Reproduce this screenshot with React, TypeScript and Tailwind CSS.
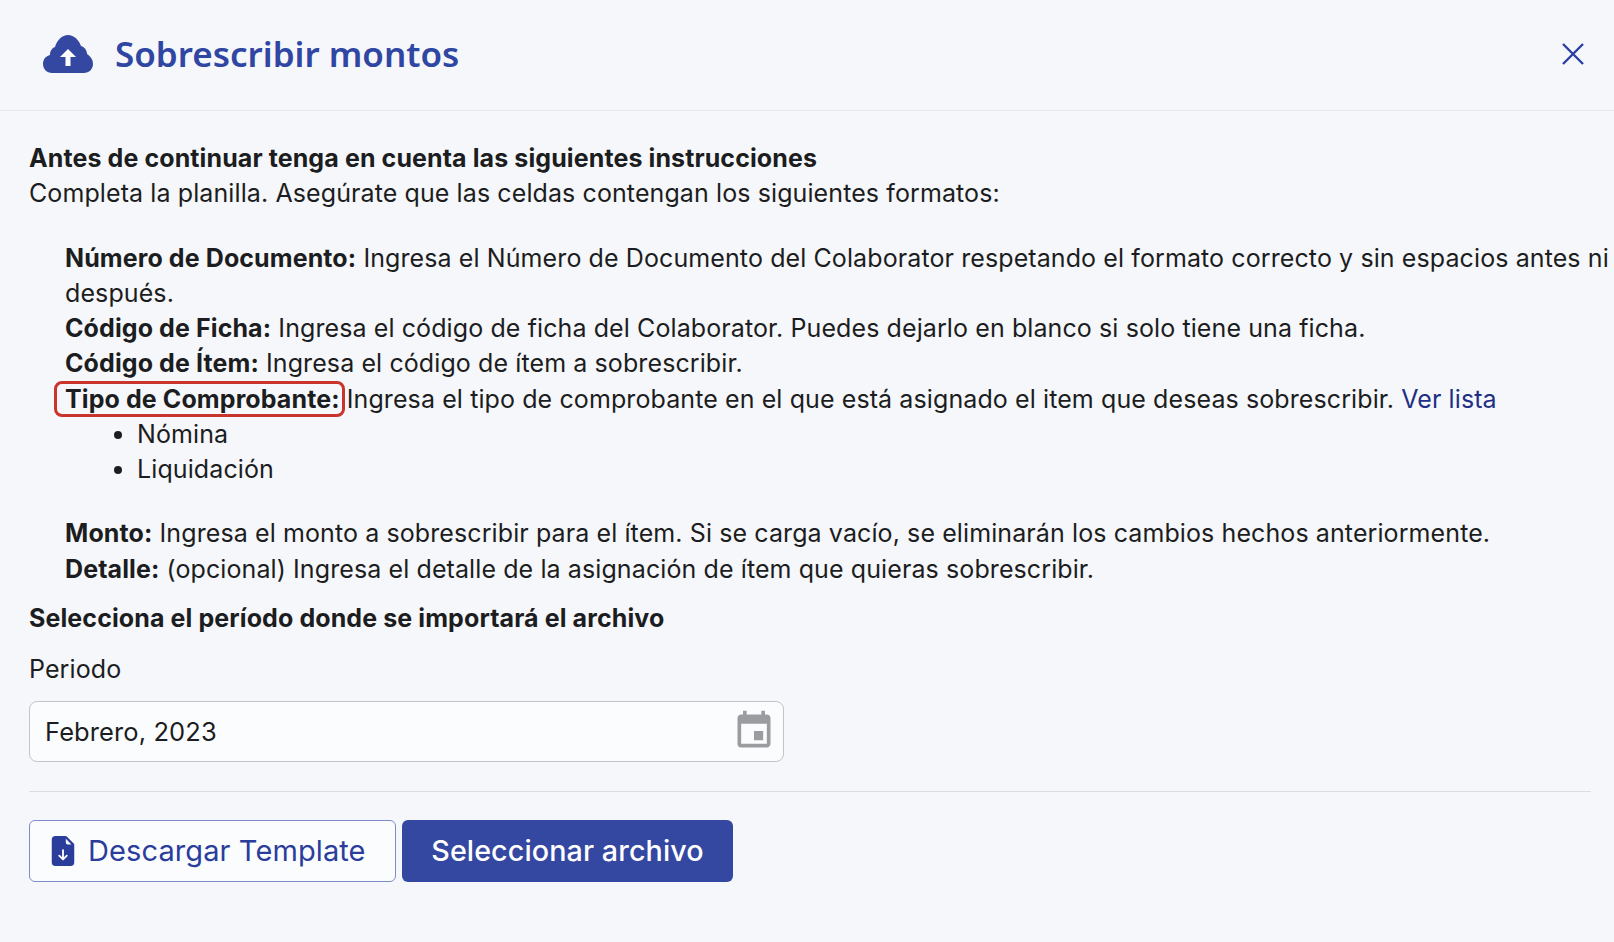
import React from "react";
import { MdEvent } from "react-icons/md";
import { BsFileEarmarkArrowDownFill } from "react-icons/bs";

const Row = ({ label, children }: { label: React.ReactNode; children: React.ReactNode }) => (
  <p>
    <b className="font-bold">{label}</b> {children}
  </p>
);

export default function App() {
  return (
    <div className="min-h-[942px] w-full overflow-hidden bg-[#f6f7fa] font-['Inter',sans-serif] text-[25px] leading-[35.3px] tracking-[0.1px] text-[#1c1d21]">
      {/* Header */}
      <div className="flex h-[111px] items-center justify-between border-b border-[#e6e7ea] pb-[2px] pl-[43px] pr-[29px]">
        <div className="flex items-center gap-[22px]">
          <svg width="50" height="38" viewBox="0 0 50 38">
            <path
              fill="#3548a1"
              d="M9 38C4 38 0 34 0 29 0 24 3 21 7 20 7 16 9 13 12 12 14 5 19 0 25 0 31 0 36 5 38 11 42 12 44 16 44 19 47 21 50 24 50 29 50 34 46 38 41 38Z"
            />
            <path fill="#ffffff" d="M25 14 33 22H27.5V31H22.5V22H17Z" />
          </svg>
          <h1 className="font-['Noto_Sans',sans-serif] text-[35px] font-semibold tracking-normal text-[#3046a3]">Sobrescribir montos</h1>
        </div>
        <svg width="24" height="24" viewBox="0 0 24 24" fill="none" stroke="#2a3fa0" strokeWidth="2.4">
          <path d="M2 2 L22 22 M22 2 L2 22" />
        </svg>
      </div>

      {/* Instructions */}
      <div className="pl-[29px] pr-[5px] pt-[30px]">
        <p className="font-bold">Antes de continuar tenga en cuenta las siguientes instrucciones</p>
        <p>Completa la planilla. Asegúrate que las celdas contengan los siguientes formatos:</p>

        <div className="mt-[29px] pl-[36px]">
          <Row label="Número de Documento:">
            Ingresa el Número de Documento del Colaborator respetando el formato correcto y sin espacios antes ni después.
          </Row>
          <Row label="Código de Ficha:">
            Ingresa el código de ficha del Colaborator. Puedes dejarlo en blanco si solo tiene una ficha.
          </Row>
          <Row label="Código de Ítem:">Ingresa el código de ítem a sobrescribir.</Row>
          <p>
            <span className="relative font-bold">
              Tipo de Comprobante:
              <span className="absolute -bottom-[3px] -left-[11px] -right-[5px] -top-[3px] rounded-[8px] border-[3px] border-[#c9352d]" />
            </span>{" "}
            Ingresa el tipo de comprobante en el que está asignado el item que deseas sobrescribir.{" "}
            <a className="text-[#1f2f85]">Ver lista</a>
          </p>
          <ul className="list-disc pl-[72px]">
            <li>Nómina</li>
            <li>Liquidación</li>
          </ul>
          <div className="mt-[28px]">
            <Row label="Monto:">
              Ingresa el monto a sobrescribir para el ítem. Si se carga vacío, se eliminarán los cambios hechos anteriormente.
            </Row>
            <div className="mt-[1px]">
              <Row label="Detalle:">(opcional) Ingresa el detalle de la asignación de ítem que quieras sobrescribir.</Row>
            </div>
          </div>
        </div>

        <p className="mt-[14px] font-bold">Selecciona el período donde se importará el archivo</p>
        <p className="mt-[15px]">Periodo</p>

        {/* Period field */}
        <div className="mt-[14px] flex h-[61px] w-[755px] items-center justify-between rounded-[8px] border border-[#c3c4c7] bg-[#fbfcfe] pl-[15px] pr-[7px] text-[25.5px]">
          <span>Febrero, 2023</span>
          <MdEvent className="text-[#9a9ca0]" size={44} />
        </div>

        {/* Divider stops short of the text column */}
        <div className="mr-[18px] mt-[29px] border-t border-[#dcdde0]" />

        {/* Actions */}
        <div className="mt-[28px] flex gap-[6px]">
          <button className="flex h-[62px] w-[367px] items-center gap-[10px] rounded-[6px] border border-[#7d8cc9] bg-[#fbfcfe] pl-[18px] text-[29px] text-[#2a3d9b]">
            <BsFileEarmarkArrowDownFill size={30} />
            Descargar Template
          </button>
          <button className="flex h-[62px] w-[331px] items-center justify-center rounded-[6px] bg-[#3548a1] text-[28.7px] font-medium text-white">
            Seleccionar archivo
          </button>
        </div>
      </div>
    </div>
  );
}
